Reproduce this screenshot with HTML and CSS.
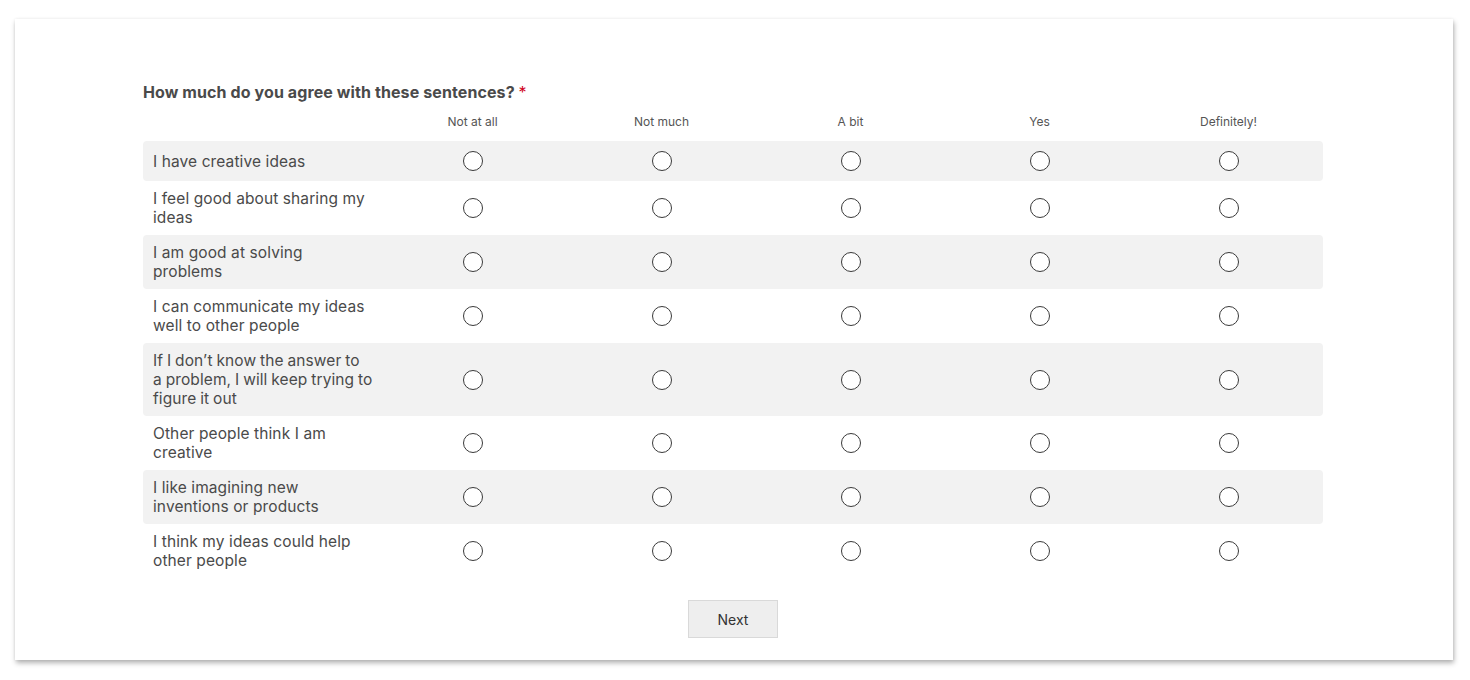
FILE: index.html
```html
<!DOCTYPE html>
<html>
<head>
<meta charset="utf-8">
<link rel="stylesheet" href="styles.css">
</head>
<body>
<div class="card">
  <div class="content">
    <h2 class="question">How much do you agree with these sentences? <span class="req">*</span></h2>
    <div class="matrix">
      <div class="row head">
        <div class="label"></div>
        <div class="col">Not at all</div>
        <div class="col">Not much</div>
        <div class="col">A bit</div>
        <div class="col">Yes</div>
        <div class="col">Definitely!</div>
      </div>
      <div class="row alt">
        <div class="label">I have creative ideas</div>
        <div class="cell"><span class="radio"></span></div><div class="cell"><span class="radio"></span></div><div class="cell"><span class="radio"></span></div><div class="cell"><span class="radio"></span></div><div class="cell"><span class="radio"></span></div>
      </div>
      <div class="row">
        <div class="label">I feel good about sharing my ideas</div>
        <div class="cell"><span class="radio"></span></div><div class="cell"><span class="radio"></span></div><div class="cell"><span class="radio"></span></div><div class="cell"><span class="radio"></span></div><div class="cell"><span class="radio"></span></div>
      </div>
      <div class="row alt">
        <div class="label">I am good at solving problems</div>
        <div class="cell"><span class="radio"></span></div><div class="cell"><span class="radio"></span></div><div class="cell"><span class="radio"></span></div><div class="cell"><span class="radio"></span></div><div class="cell"><span class="radio"></span></div>
      </div>
      <div class="row">
        <div class="label">I can communicate my ideas well to other people</div>
        <div class="cell"><span class="radio"></span></div><div class="cell"><span class="radio"></span></div><div class="cell"><span class="radio"></span></div><div class="cell"><span class="radio"></span></div><div class="cell"><span class="radio"></span></div>
      </div>
      <div class="row alt">
        <div class="label tight">If I don’t know the answer to a&nbsp;problem, I will keep trying to figure it out</div>
        <div class="cell"><span class="radio"></span></div><div class="cell"><span class="radio"></span></div><div class="cell"><span class="radio"></span></div><div class="cell"><span class="radio"></span></div><div class="cell"><span class="radio"></span></div>
      </div>
      <div class="row">
        <div class="label">Other people think I am creative</div>
        <div class="cell"><span class="radio"></span></div><div class="cell"><span class="radio"></span></div><div class="cell"><span class="radio"></span></div><div class="cell"><span class="radio"></span></div><div class="cell"><span class="radio"></span></div>
      </div>
      <div class="row alt">
        <div class="label">I like imagining new inventions or products</div>
        <div class="cell"><span class="radio"></span></div><div class="cell"><span class="radio"></span></div><div class="cell"><span class="radio"></span></div><div class="cell"><span class="radio"></span></div><div class="cell"><span class="radio"></span></div>
      </div>
      <div class="row">
        <div class="label">I think my ideas could help other people</div>
        <div class="cell"><span class="radio"></span></div><div class="cell"><span class="radio"></span></div><div class="cell"><span class="radio"></span></div><div class="cell"><span class="radio"></span></div><div class="cell"><span class="radio"></span></div>
      </div>
    </div>
    <div class="actions">
      <button class="next">Next</button>
    </div>
  </div>
</div>
</body>
</html>
```

FILE: styles.css
```css
html, body {
  margin: 0;
  padding: 0;
  background: #ffffff;
}
body {
  font-family: Inter, "Noto Sans", "Liberation Sans", sans-serif;
  color: #444;
  padding-bottom: 20px;
}
.card {
  margin: 19px 0 0 15px;
  width: 1438px;
  height: 641px;
  box-sizing: border-box;
  background: #fff;
  box-shadow: 1px 3px 5px rgba(0, 0, 0, 0.3), 0 0 3px rgba(0, 0, 0, 0.06);
}
.content {
  width: 1180px;
  margin-left: 128px;
  padding-top: 63px;
}
.question {
  margin: 0;
  font-size: 16px;
  font-weight: 700;
  letter-spacing: 0.1px;
  line-height: 20px;
  color: #4a4a4a;
}
.req {
  color: #d0021b;
  font-weight: 400;
}
.matrix {
  margin-top: 12px;
}
.row {
  display: grid;
  grid-template-columns: 235px repeat(5, 189px);
  align-items: center;
  border-radius: 4px;
}
.row.alt {
  background: #f2f2f2;
}
.row.head {
  padding-bottom: 11px;
}
.row.head .label {
  padding: 0;
}
.col {
  text-align: center;
  font-size: 12px;
  color: #555;
  line-height: 16px;
}
.label {
  padding: 8px 4px 8px 10px;
  font-size: 15.5px;
  letter-spacing: 0.1px;
  line-height: 19px;
  color: #4a4a4a;
}
.label.tight {
  word-spacing: -0.6px;
}
.cell {
  display: flex;
  justify-content: center;
  align-items: center;
  padding: 10px 0;
}
.radio {
  display: block;
  width: 18px;
  height: 18px;
  border: 1px solid #3a3a3a;
  border-radius: 50%;
  background: #fff;
}
.actions {
  display: flex;
  justify-content: center;
  margin-top: 22px;
}
.next {
  width: 90px;
  height: 38px;
  background: #eeeeee;
  border: 1px solid #d9d9d9;
  font-family: Inter, "Noto Sans", sans-serif;
  font-size: 14px;
  color: #333;
  padding: 0;
  cursor: pointer;
}
```
